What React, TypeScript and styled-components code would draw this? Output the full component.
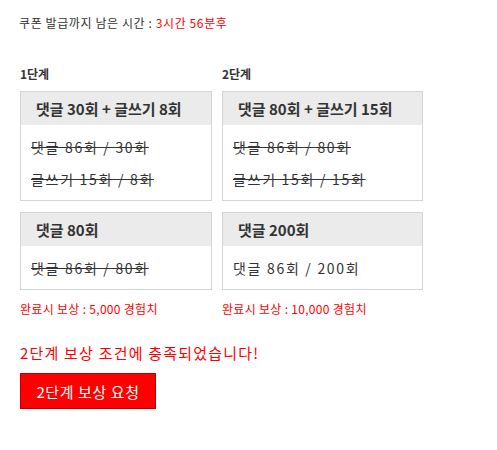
import React from "react";
import styled, { createGlobalStyle } from "styled-components";

const GlobalStyle = createGlobalStyle`
  html, body { margin: 0; padding: 0; background: #fff; }
  body {
    font-family: "Noto Sans CJK KR", "Noto Sans", "Liberation Sans", sans-serif;
    color: #333;
  }
`;

const Page = styled.div`
  padding: 15px 19px;
  display: flex;
  flex-direction: column;
  align-items: flex-start;
`;

const Timer = styled.div`
  font-size: 12px;
  line-height: 16px;
  letter-spacing: 0.6px;
  color: #333;
`;

const Red = styled.span`
  color: #f00;
`;

const StageGrid = styled.div`
  margin-top: 35px;
  margin-left: 1px;
  display: grid;
  grid-template-columns: 192px 201px;
  column-gap: 10px;
  row-gap: 11px;
`;

const StageLabel = styled.div`
  font-size: 12px;
  line-height: 16px;
  font-weight: bold;
  color: #333;
  margin-bottom: -2px;
`;

const Box = styled.div`
  border: 1px solid #d5d5d5;
  background: #fff;
  display: flex;
  flex-direction: column;
`;

const BoxHeader = styled.div`
  background: #ebebeb;
  height: 33px;
  line-height: 33px;
  padding: 0 15px;
  font-size: 15px;
  font-weight: bold;
  color: #333;
  white-space: nowrap;
`;

const BoxBody = styled.div`
  padding: 6px 10px 5px;
  flex: 1;
`;

const Line = styled.div<{ $done?: boolean }>`
  font-size: 14px;
  line-height: 32px;
  letter-spacing: 1.7px;
  color: #333;
  white-space: nowrap;
  text-decoration: ${(p) => (p.$done ? "line-through" : "none")};
`;

const Reward = styled.div`
  font-size: 12px;
  line-height: 16px;
  letter-spacing: 0.3px;
  color: #f00;
`;

const Message = styled.div`
  margin-top: 26px;
  font-size: 15px;
  line-height: 20px;
  letter-spacing: 1.2px;
  color: #f00;
  margin-left: 1px;
`;

const RequestButton = styled.button`
  margin-top: 10px;
  margin-left: 1px;
  width: 136px;
  height: 36px;
  background: #f00;
  border: 1px solid #c00000;
  color: #fff;
  font-family: inherit;
  font-size: 15px;
  letter-spacing: 0.6px;
  padding: 0;
  cursor: pointer;
`;

type Goal = { title: string; lines: { text: string; done: boolean }[] };

const stages: { label: string; goals: Goal[]; reward: string }[] = [
  {
    label: "1단계",
    goals: [
      {
        title: "댓글 30회 + 글쓰기 8회",
        lines: [
          { text: "댓글 86회 / 30회", done: true },
          { text: "글쓰기 15회 / 8회", done: true },
        ],
      },
      {
        title: "댓글 80회",
        lines: [{ text: "댓글 86회 / 80회", done: true }],
      },
    ],
    reward: "완료시 보상 : 5,000 경험치",
  },
  {
    label: "2단계",
    goals: [
      {
        title: "댓글 80회 + 글쓰기 15회",
        lines: [
          { text: "댓글 86회 / 80회", done: true },
          { text: "글쓰기 15회 / 15회", done: true },
        ],
      },
      {
        title: "댓글 200회",
        lines: [{ text: "댓글 86회 / 200회", done: false }],
      },
    ],
    reward: "완료시 보상 : 10,000 경험치",
  },
];

const GoalBox = ({ goal }: { goal: Goal }) => (
  <Box>
    <BoxHeader>{goal.title}</BoxHeader>
    <BoxBody>
      {goal.lines.map((l, i) => (
        <Line key={i} $done={l.done}>
          {l.text}
        </Line>
      ))}
    </BoxBody>
  </Box>
);

export default function App() {
  return (
    <>
      <GlobalStyle />
      <Page>
        <Timer>
          쿠폰 발급까지 남은 시간 : <Red>3시간 56분후</Red>
        </Timer>
        <StageGrid>
          {stages.map((s) => (
            <StageLabel key={s.label}>{s.label}</StageLabel>
          ))}
          {stages.map((s) => (
            <GoalBox key={s.label + "0"} goal={s.goals[0]} />
          ))}
          {stages.map((s) => (
            <GoalBox key={s.label + "1"} goal={s.goals[1]} />
          ))}
          {stages.map((s) => (
            <Reward key={s.label + "r"}>{s.reward}</Reward>
          ))}
        </StageGrid>
        <Message>2단계 보상 조건에 충족되었습니다!</Message>
        <RequestButton type="button">2단계 보상 요청</RequestButton>
      </Page>
    </>
  );
}
